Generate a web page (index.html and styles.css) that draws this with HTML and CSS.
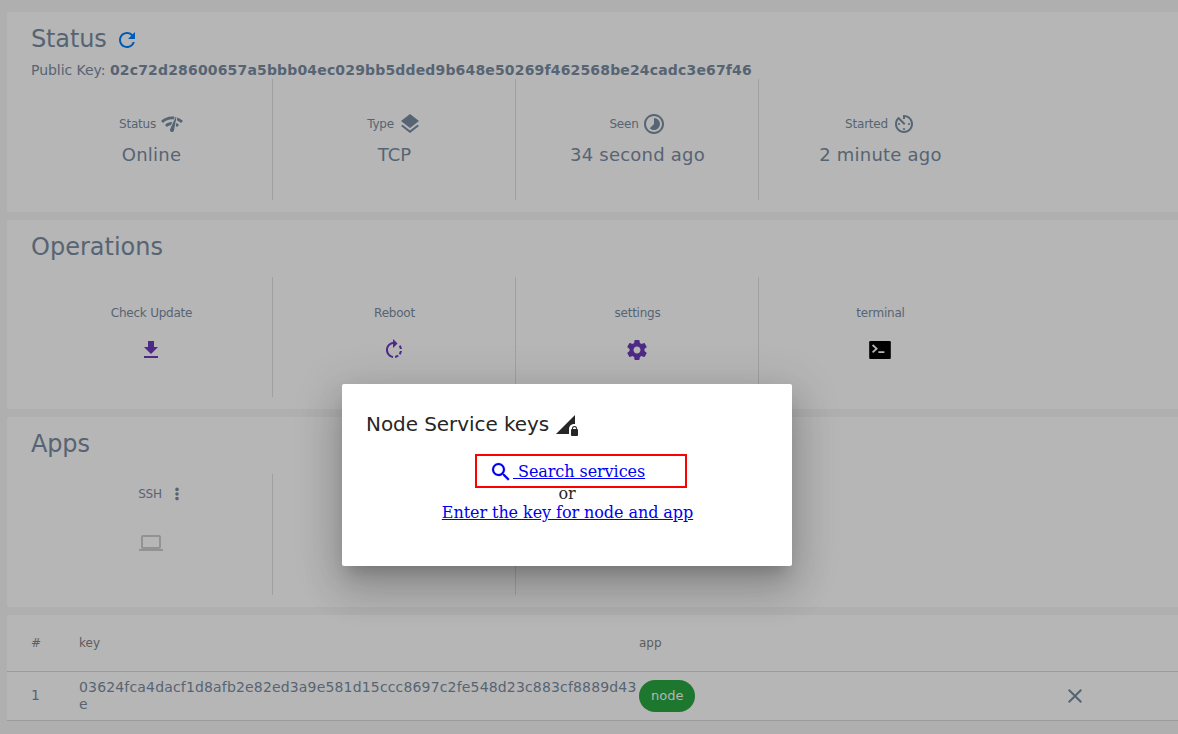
FILE: index.html
```html
<!DOCTYPE html>
<html lang="en">
<head>
<meta charset="utf-8">
<title>Node</title>
<link rel="stylesheet" href="styles.css">
</head>
<body>
<main class="page">
  <section class="card card-status">
    <h1 class="title">Status <svg class="icon refresh" viewBox="0 0 24 24"><path d="M17.65 6.35A7.958 7.958 0 0 0 12 4c-4.42 0-7.99 3.58-7.99 8s3.57 8 7.99 8c3.73 0 6.84-2.55 7.73-6h-2.08A5.99 5.99 0 0 1 12 18c-3.31 0-6-2.69-6-6s2.69-6 6-6c1.66 0 3.14.69 4.22 1.78L13 11h7V4l-2.35 2.35z"/></svg></h1>
    <p class="public-key">Public Key: <b>02c72d28600657a5bbb04ec029bb5dded9b648e50269f462568be24cadc3e67f46</b></p>
    <div class="cells">
      <div class="cell">
        <div class="label">Status <svg class="icon" viewBox="0 0 24 24"><path d="M15.9 5c-.17 0-.32.09-.41.23l-.07.15-5.18 11.65c-.16.29-.26.61-.26.96 0 1.11.9 2.01 2.01 2.01.96 0 1.77-.68 1.96-1.59l.01-.03L16.4 5.5c0-.28-.22-.5-.5-.5zM1 9l2 2c2.88-2.88 6.79-4.08 10.53-3.62l1.19-2.68C9.89 3.84 4.74 5.27 1 9zm20 2 2-2c-1.64-1.64-3.55-2.82-5.59-3.57l-.53 2.82c1.5.62 2.9 1.53 4.12 2.75zm-4 4 2-2c-.8-.8-1.7-1.42-2.66-1.89l-.55 2.92c.42.27.83.59 1.21.97zM5 13l2 2c1.13-1.13 2.56-1.79 4.03-2l1.28-2.88c-2.63-.08-5.3.87-7.31 2.88z"/></svg></div>
        <div class="value">Online</div>
      </div>
      <div class="cell">
        <div class="label">Type <svg class="icon" viewBox="0 0 24 24"><path d="m11.99 18.54-7.37-5.73L3 14.07l9 7 9-7-1.63-1.27-7.38 5.74zM12 16l7.36-5.73L21 9l-9-7-9 7 1.63 1.27L12 16z"/></svg></div>
        <div class="value tight">TCP</div>
      </div>
      <div class="cell">
        <div class="label label-seen">Seen <svg class="icon" viewBox="0 0 24 24"><path d="M16.24 7.76A5.974 5.974 0 0 0 12 6v6l-4.24 4.24c2.34 2.34 6.14 2.34 8.49 0a5.99 5.99 0 0 0-.01-8.48zM12 2C6.48 2 2 6.48 2 12s4.48 10 10 10 10-4.48 10-10S17.52 2 12 2zm0 18c-4.42 0-8-3.58-8-8s3.58-8 8-8 8 3.58 8 8-3.58 8-8 8z"/></svg></div>
        <div class="value">34 second ago</div>
      </div>
      <div class="cell">
        <div class="label">Started <svg class="icon" viewBox="0 0 24 24"><path d="M11 17c0 .55.45 1 1 1s1-.45 1-1-.45-1-1-1-1 .45-1 1zm0-14v4h2V5.08c3.39.49 6 3.39 6 6.92 0 3.87-3.13 7-7 7s-7-3.13-7-7c0-1.68.59-3.22 1.58-4.42L12 13l1.41-1.41-6.8-6.8v.02C4.42 6.45 3 9.05 3 12c0 4.97 4.02 9 9 9 4.97 0 9-4.03 9-9s-4.03-9-9-9h-1zm7 9c0-.55-.45-1-1-1s-1 .45-1 1 .45 1 1 1 1-.45 1-1zM6 12c0 .55.45 1 1 1s1-.45 1-1-.45-1-1-1-1 .45-1 1z"/></svg></div>
        <div class="value">2 minute ago</div>
      </div>
    </div>
  </section>

  <section class="card card-operations">
    <h1 class="title">Operations</h1>
    <div class="cells">
      <div class="cell">
        <div class="label">Check Update</div>
        <svg class="icon action" viewBox="0 0 24 24"><path d="M19 9h-4V3H9v6H5l7 7 7-7zM5 18v2h14v-2H5z"/></svg>
      </div>
      <div class="cell">
        <div class="label">Reboot</div>
        <svg class="icon action" viewBox="0 0 24 24"><path d="M15.55 5.55 11 1v3.07C7.06 4.56 4 7.92 4 12s3.05 7.44 7 7.93v-2.02c-2.84-.48-5-2.94-5-5.91s2.16-5.43 5-5.91V10l4.55-4.45zM19.93 11a7.906 7.906 0 0 0-1.62-3.89l-1.42 1.42c.54.75.88 1.6 1.02 2.47h2.02zM13 17.9v2.02c1.39-.17 2.74-.71 3.9-1.61l-1.44-1.44c-.75.54-1.59.89-2.46 1.03zm3.89-2.42 1.42 1.41c.9-1.16 1.45-2.5 1.62-3.89h-2.02c-.14.87-.48 1.72-1.02 2.48z"/></svg>
      </div>
      <div class="cell">
        <div class="label">settings</div>
        <svg class="icon action" viewBox="0 0 24 24"><path d="M19.43 12.98c.04-.32.07-.64.07-.98s-.03-.66-.07-.98l2.11-1.65c.19-.15.24-.42.12-.64l-2-3.46c-.12-.22-.39-.3-.61-.22l-2.49 1c-.52-.4-1.08-.73-1.69-.98l-.38-2.65A.488.488 0 0 0 14 2h-4c-.25 0-.46.18-.49.42l-.38 2.65c-.61.25-1.17.59-1.69.98l-2.49-1c-.23-.09-.49 0-.61.22l-2 3.46c-.13.22-.07.49.12.64l2.11 1.65c-.04.32-.07.65-.07.98s.03.66.07.98l-2.11 1.65c-.19.15-.24.42-.12.64l2 3.46c.12.22.39.3.61.22l2.49-1c.52.4 1.08.73 1.69.98l.38 2.65c.03.24.24.42.49.42h4c.25 0 .46-.18.49-.42l.38-2.65c.61-.25 1.17-.59 1.69-.98l2.49 1c.23.09.49 0 .61-.22l2-3.46c.12-.22.07-.49-.12-.64l-2.11-1.65zM12 15.5c-1.93 0-3.5-1.57-3.5-3.5s1.57-3.5 3.5-3.5 3.5 1.57 3.5 3.5-1.57 3.5-3.5 3.5z"/></svg>
      </div>
      <div class="cell">
        <div class="label">terminal</div>
        <svg class="icon action" viewBox="0 0 24 24"><rect x="1.2" y="3" width="21.6" height="18" rx="1.2" fill="#000"/><path d="m4.6 7 4 3.7-4 3.7M10.4 14.2h6" fill="none" stroke="#b6b6b6" stroke-width="1.8"/></svg>
      </div>
    </div>
  </section>

  <section class="card card-apps">
    <h1 class="title">Apps</h1>
    <div class="cells">
      <div class="cell">
        <div class="label">SSH <svg class="icon dots" viewBox="0 0 16 16"><circle cx="8" cy="3.4" r="1.8"/><circle cx="8" cy="8" r="1.8"/><circle cx="8" cy="12.6" r="1.8"/></svg></div>
        <svg class="icon action laptop" viewBox="0 0 24 24"><path d="M20 18c1.1 0 1.99-.9 1.99-2L22 6c0-1.1-.9-2-2-2H4c-1.1 0-2 .9-2 2v10c0 1.1.9 2 2 2H0v2h24v-2h-4zM4 6h16v10H4V6z"/></svg>
      </div>
      <div class="cell"></div>
      <div class="cell"></div>
    </div>
  </section>

  <section class="table">
    <div class="row head"><span>#</span><span>key</span><span>app</span><span></span></div>
    <div class="row">
      <span class="index">1</span>
      <span class="key">03624fca4dacf1d8afb2e82ed3a9e581d15ccc8697c2fe548d23c883cf8889d43<br>e</span>
      <span><span class="chip">node</span></span>
      <span class="close"><svg class="icon" viewBox="0 0 24 24"><path d="M19 6.41 17.59 5 12 10.59 6.41 5 5 6.41 10.59 12 5 17.59 6.41 19 12 13.41 17.59 19 19 17.59 13.41 12z"/></svg></span>
    </div>
  </section>
</main>

<div class="dialog" role="dialog">
  <h2 class="dialog-title">Node Service keys <svg class="icon" viewBox="0 0 24 24"><path d="M20 11V2L1 21h13v-5c0-2.2 1.2-4.2 3.4-4.8.8-.3 1.7-.3 2.6-.2z"/><path d="M22 16v-.5a2.5 2.5 0 0 0-5 0v.5c-.5 0-1 .5-1 1v5c0 .5.5 1 1 1h5c.5 0 1-.5 1-1v-5c0-.5-.5-1-1-1zm-1 0h-3v-.5a1.5 1.5 0 0 1 3 0v.5z"/></svg></h2>
  <div class="search-box">
    <svg class="icon search-icon" viewBox="0 0 24 24"><path d="M15.5 14h-.79l-.28-.27A6.471 6.471 0 0 0 16 9.5 6.5 6.5 0 1 0 9.5 16c1.61 0 3.09-.59 4.23-1.57l.27.28v.79l5 4.99L20.49 19l-4.99-5zm-6 0C7.01 14 5 11.99 5 9.5S7.01 5 9.5 5 14 7.01 14 9.5 11.99 14 9.5 14z"/></svg><a class="link" href="#"> Search services</a>
  </div>
  <div class="or">or</div>
  <a class="link key-link" href="#">Enter the key for node and app</a>
</div>
</body>
</html>
```
FILE: styles.css
```css
* { box-sizing: border-box; }
body {
  margin: 0;
  height: 734px;
  overflow: hidden;
  background: #afafaf;
  color: #566473;
  font-family: "DejaVu Sans", sans-serif;
}
.page {
  display: flex;
  flex-direction: column;
  gap: 8px;
  padding: 12px 0 0 7px;
}
.card {
  display: flex;
  flex-direction: column;
  padding: 11px 0 12px 24px;
  background: #b6b6b6;
  border-radius: 2px 0 0 2px;
}
.card-status { height: 200px; }
.card-operations { height: 189px; }
.card-apps { height: 190px; }
.title {
  display: flex;
  align-items: center;
  margin: 0;
  font-size: 24px;
  font-weight: 400;
  line-height: 32px;
}
.card-status .title, .card-apps .title { letter-spacing: -.15px; }
.icon {
  flex: none;
  display: block;
  width: 24px;
  height: 24px;
  fill: currentColor;
}
.refresh { margin: 1px 0 0 8px; color: #005bb6; }
.public-key {
  margin: 5px 0 -1px;
  font-size: 14px;
  line-height: 20px;
  letter-spacing: -.04px;
}
.public-key b { letter-spacing: .16px; }
.cells { display: flex; flex: none; margin-top: auto; height: 120px; }
.card-status .cells, .card-apps .cells { height: 121px; }
.cell {
  display: flex;
  flex-direction: column;
  align-items: center;
  width: 243px;
  padding-top: 33px;
  border-right: 1px solid #a0a0a0;
}
.cell:first-child { width: 242px; padding-right: 1px; }
.cell:last-child { border-right-color: transparent; }
.label {
  display: flex;
  align-items: center;
  gap: 4px;
  height: 24px;
  padding-left: 1px;
  font-size: 12px;
  letter-spacing: -.22px;
}
.label-seen { gap: 3px; }
.value { margin-top: 8px; padding-left: 1px; font-size: 18px; line-height: 22px; letter-spacing: .22px; }
.tight { letter-spacing: 0; }
.card-operations .cell { padding-top: 24px; }
.action { margin-top: 13px; color: #4d2a86; }
.card-apps .cell { padding-top: 8px; }
.card-apps .label { gap: 7px; margin-left: 20px; }
.dots { width: 16px; height: 16px; }
.laptop { margin-top: 25px; color: #929292; }
.table { background: #b6b6b6; }
.row {
  display: grid;
  grid-template-columns: 48px 560px 424px 1fr;
  align-items: center;
  height: 49px;
  padding-left: 24px;
  border-bottom: 1px solid #9b9b9b;
  font-size: 14px;
}
.head { height: 57px; font-size: 12px; color: #5d5d5d; }
.index { padding-bottom: 2px; }
.key { line-height: 17px; white-space: nowrap; letter-spacing: .165px; }
.chip {
  display: inline-flex;
  align-items: center;
  height: 32px;
  padding: 0 12px 2px;
  border-radius: 16px;
  background: #1d772f;
  color: #b6b6b6;
  font-size: 13px;
}
.dialog {
  position: absolute;
  left: 342px;
  top: 384px;
  display: flex;
  flex-direction: column;
  align-items: center;
  width: 450px;
  height: 182px;
  padding: 24px;
  border-radius: 2px;
  background: #fff;
  color: #262626;
  font: 16px/19px "DejaVu Serif", serif;
  letter-spacing: -.07px;
  box-shadow: 0 11px 15px -7px rgba(0,0,0,.2), 0 24px 38px 3px rgba(0,0,0,.14), 0 9px 46px 8px rgba(0,0,0,.12);
}
.dialog-title {
  display: flex;
  align-self: stretch;
  gap: 6px;
  margin: 0;
  font: 20px/32px "DejaVu Sans", sans-serif;
}
.dialog-title .icon { margin-top: 5px; }
.search-box {
  display: flex;
  align-items: center;
  width: 212px;
  height: 34px;
  margin: 14px 0 0 28px;
  padding-left: 12px;
  border: 2px solid #f00;
  color: #00e;
}
.search-icon { margin-top: 1px; stroke: currentColor; stroke-width: .2; }
.link { color: #00e; white-space: pre; }
.key-link { margin-left: 1px; }
.or { margin-top: -4px; }
```
